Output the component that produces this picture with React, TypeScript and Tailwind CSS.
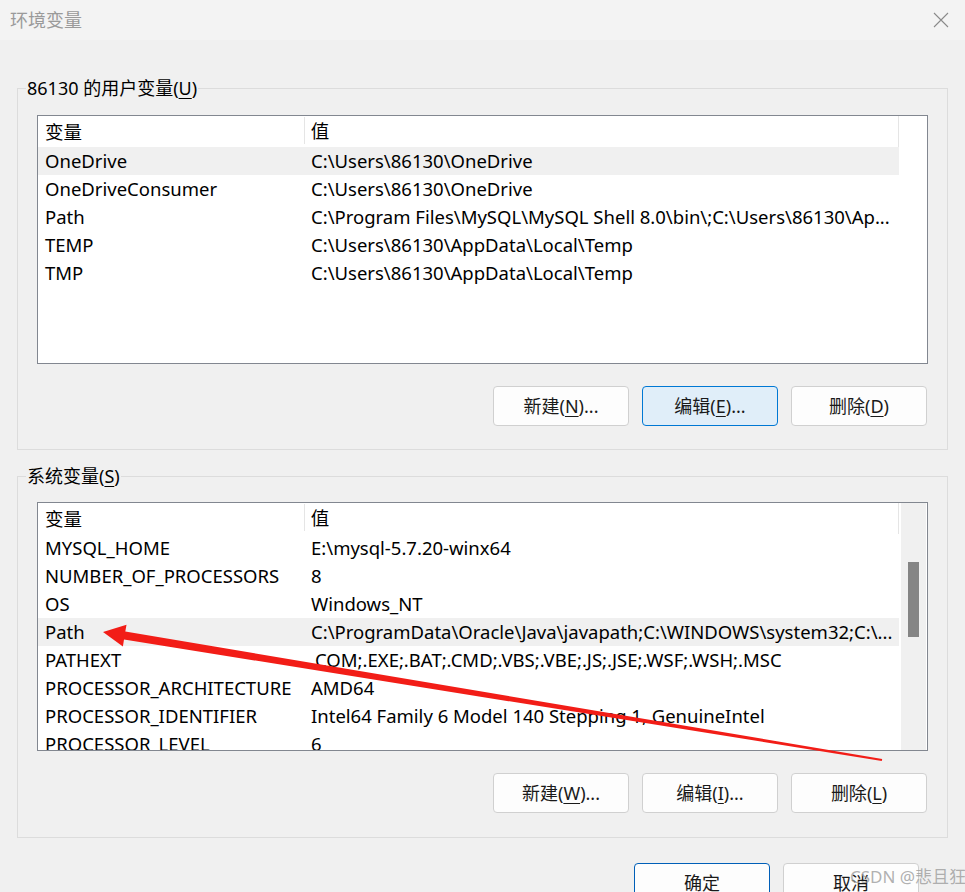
import React from "react";

const userVars = [
  { name: "OneDrive", value: "C:\\Users\\86130\\OneDrive", selected: true },
  { name: "OneDriveConsumer", value: "C:\\Users\\86130\\OneDrive" },
  { name: "Path", value: "C:\\Program Files\\MySQL\\MySQL Shell 8.0\\bin\\;C:\\Users\\86130\\Ap..." },
  { name: "TEMP", value: "C:\\Users\\86130\\AppData\\Local\\Temp" },
  { name: "TMP", value: "C:\\Users\\86130\\AppData\\Local\\Temp" },
];

const sysVars = [
  { name: "MYSQL_HOME", value: "E:\\mysql-5.7.20-winx64" },
  { name: "NUMBER_OF_PROCESSORS", value: "8" },
  { name: "OS", value: "Windows_NT" },
  { name: "Path", value: "C:\\ProgramData\\Oracle\\Java\\javapath;C:\\WINDOWS\\system32;C:\\...", selected: true },
  { name: "PATHEXT", value: ".COM;.EXE;.BAT;.CMD;.VBS;.VBE;.JS;.JSE;.WSF;.WSH;.MSC" },
  { name: "PROCESSOR_ARCHITECTURE", value: "AMD64" },
  { name: "PROCESSOR_IDENTIFIER", value: "Intel64 Family 6 Model 140 Stepping 1, GenuineIntel" },
  { name: "PROCESSOR_LEVEL", value: "6" },
];

function Row({ name, value, selected }: { name: string; value: string; selected?: boolean }) {
  return (
    <div className={`flex h-[28px] w-[861px] shrink-0 items-center ${selected ? "bg-[#f0f0f0]" : ""}`}>
      <div className="w-[266px] overflow-hidden whitespace-nowrap pl-[7px]">{name}</div>
      <div className="w-[595px] overflow-hidden whitespace-nowrap pl-[7px]">{value}</div>
    </div>
  );
}

function Header() {
  return (
    <div className="flex h-[31px] w-[861px] shrink-0 items-center border-r border-[#e5e5e5]">
      <div className="w-[266px] pl-[7px]">变量</div>
      <div className="h-full w-[595px] py-[1px]">
        <div className="flex h-[27px] items-center border-l border-[#e5e5e5] pl-[6px]">值</div>
      </div>
    </div>
  );
}

function Btn({ label, k, after, active, primary }: { label: string; k: string; after?: string; active?: boolean; primary?: boolean }) {
  const tone = active
    ? "bg-[#e0eef9] border-[#0078d4]"
    : primary
    ? "bg-[#fdfdfd] border-[#005fb8]"
    : "bg-[#fdfdfd] border-[#d0d0d0]";
  return (
    <button className={`flex h-[40px] w-[136px] shrink-0 items-center justify-center rounded-[4px] border ${tone} text-[18px] text-[#1a1a1a]`}>
      {label}
      {k && (
        <>
          (<u className="underline-offset-[3px]">{k}</u>)
        </>
      )}
      {after}
    </button>
  );
}

function Group({ title, k, rows, scroll, top, buttons }: { title: string; k: string; rows: typeof sysVars; scroll?: boolean; top: string; buttons: React.ReactNode }) {
  return (
    <div className={`relative ml-[17px] h-[362px] w-[931px] border border-[#dcdcdc] pl-[19px] ${top}`}>
      <div className="absolute left-[8px] top-[-13px] bg-[#f0f0f0] px-[1px] text-[18px] leading-[24px]">
        {title}(<u className="underline-offset-[3px]">{k}</u>)
      </div>
      <div className="flex h-[249px] w-[891px] overflow-hidden border border-[#828790] bg-white">
        <div className="flex w-[863px] flex-col overflow-hidden">
          <Header />
          {rows.map((r) => (
            <Row key={r.name} {...r} />
          ))}
        </div>
        {scroll && (
          <div className="w-[25px] bg-[#f0f0f0] pl-[7px] pt-[59px]">
            <div className="h-[75px] w-[11px] bg-[#858585]" />
          </div>
        )}
      </div>
      <div className="mt-[22px] flex justify-end gap-[13px] pr-[20px]">{buttons}</div>
    </div>
  );
}

export default function App() {
  return (
    <div className="relative h-[892px] w-[965px] overflow-hidden bg-[#f0f0f0] font-['Noto_Sans','Noto_Sans_CJK_SC',sans-serif] text-[18.5px] text-black">
      <div className="flex h-[40px] items-center justify-between bg-[#f3f3f3] pl-[10px] pr-[16px]">
        <span className="text-[18px] text-[#9a9a9a]">环境变量</span>
        <svg width="16" height="16" viewBox="0 0 16 16" className="text-[#8a8a8a]">
          <path d="M1 1 L15 15 M15 1 L1 15" stroke="currentColor" strokeWidth="1.1" />
        </svg>
      </div>

      <div className="pt-[48px]">
        <Group
          title="86130 的用户变量"
          k="U"
          top="pt-[26px]"
          rows={userVars}
          buttons={
            <>
              <Btn label="新建" k="N" after="..." />
              <Btn label="编辑" k="E" after="..." active />
              <Btn label="删除" k="D" />
            </>
          }
        />
      </div>

      <div className="pt-[26px]">
        <Group
          title="系统变量"
          k="S"
          top="pt-[25px]"
          rows={sysVars}
          scroll
          buttons={
            <>
              <Btn label="新建" k="W" after="..." />
              <Btn label="编辑" k="I" after="..." />
              <Btn label="删除" k="L" />
            </>
          }
        />
      </div>

      <div className="mt-[25px] flex justify-end gap-[13px] pr-[46px]">
        <Btn label="确定" k="" primary />
        <Btn label="取消" k="" />
      </div>

      <svg className="pointer-events-none absolute left-0 top-0" width="965" height="892">
        <polygon
          points="103,632 126.5,624.7 125.3,631.6 882.2,759 881.8,761 124,639.5 122.9,646.5"
          fill="#f21d17"
        />
      </svg>

      <div className="pointer-events-none absolute left-[850px] top-[865px] whitespace-nowrap text-[17px] leading-[24px] text-[#9c9c9c]/80">
        CSDN @悲且狂
      </div>
    </div>
  );
}
